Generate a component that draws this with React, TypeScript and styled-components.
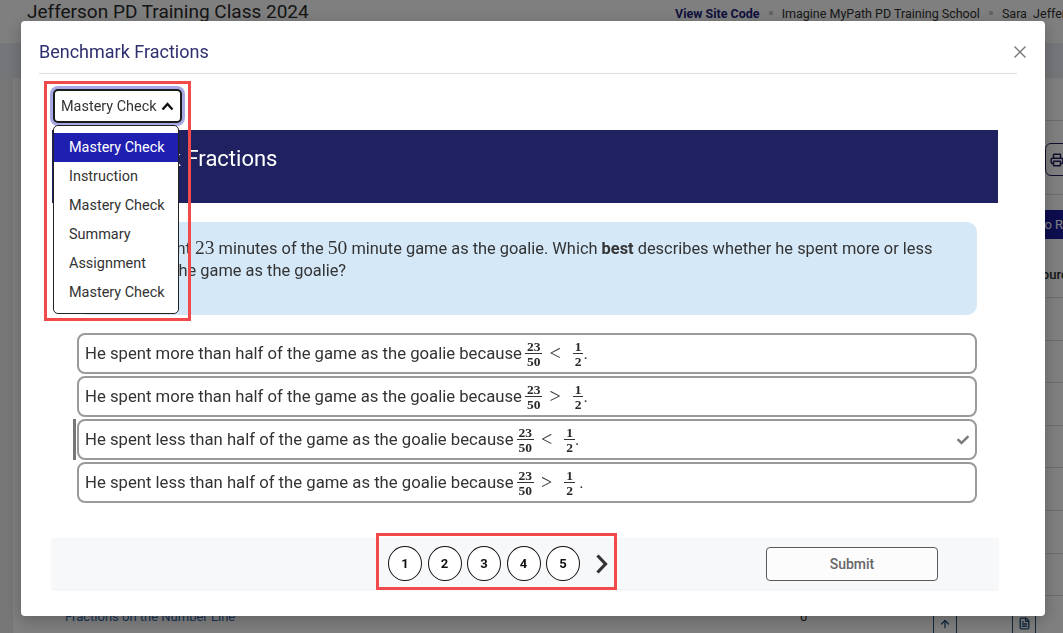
import styled, { createGlobalStyle } from "styled-components";
import { FaCheck } from "react-icons/fa";
import { Printer, ArrowUp, FileText } from "lucide-react";

const GlobalStyle = createGlobalStyle`
  * { box-sizing: border-box; }
  html, body { margin: 0; padding: 0; }
  body {
    font-family: Roboto, "Liberation Sans", Arial, sans-serif;
    background: #ffffff;
    color: #2c2c2c;
    overflow: hidden;
  }
`;

const serif = `"Liberation Serif", "DejaVu Serif", "Times New Roman", serif`;

/* ---------- page behind the dialog ---------- */

const Page = styled.div`
  height: 633px;
  overflow: hidden;
  background: #ffffff;
`;

const TopBar = styled.header`
  display: grid;
  grid-template-columns: 648px auto;
  align-items: start;
  height: 26px;
  padding-left: 27px;
  white-space: nowrap;
  overflow: hidden;
`;

const ClassTitle = styled.h1`
  margin: 1px 0 0;
  font-size: 19px;
  font-weight: 400;
  line-height: 22px;
  color: #2a2a2a;
`;

const TopLinks = styled.nav`
  display: flex;
  align-items: center;
  gap: 9px;
  height: 26px;
  font-size: 12.5px;
  color: #303030;
`;

const SiteCode = styled.a`
  font-weight: 700;
  color: #1c1e78;
  text-decoration: none;
`;

const Bullet = styled.span`
  width: 4px;
  height: 4px;
  border-radius: 1px;
  background: #c8c8c8;
`;

const NavBand = styled.div`
  margin-top: 17px;
  height: 35px;
  background: #eaedf5;
`;

const Workspace = styled.div`
  display: flex;
  height: 555px;
`;

const SideRail = styled.aside`
  flex: 0 0 13px;
  background: #efefef;
`;

const Main = styled.main`
  flex: 1;
  min-width: 0;
  padding-left: 8px;
`;

const Toolbar = styled.div`
  display: flex;
  justify-content: flex-end;
  align-items: flex-start;
  margin-top: 42px;
  height: 75px;
  padding-top: 22px;
  border-top: 1px solid #dadada;
  border-bottom: 1px solid #dadada;
`;

const PrintButton = styled.button`
  display: flex;
  flex-shrink: 0;
  align-items: center;
  gap: 6px;
  width: 70px;
  height: 33px;
  margin-right: -52px;
  padding: 0 4px;
  border: 1.5px solid #1f2160;
  border-radius: 6px;
  background: #ffffff;
  color: #1f2160;
  font-size: 13px;
`;

const ActionRow = styled.div`
  display: flex;
  justify-content: flex-end;
  height: 56px;
  padding-top: 15px;
`;

const ResourceButton = styled.button`
  flex-shrink: 0;
  height: 29px;
  margin-right: -63px;
  padding: 0 10px;
  border: 0;
  border-radius: 3px;
  background: #1a1a9e;
  color: #ffffff;
  font-family: inherit;
  font-size: 13px;
  white-space: nowrap;
`;

const TableRow = styled.div<{ $head?: boolean }>`
  display: grid;
  grid-template-columns: 735px 133px 79px 140px;
  align-items: center;
  height: ${(p) => (p.$head ? "47px" : "42.6px")};
  padding-left: 44px;
  border-bottom: 1px solid #dadada;
  font-size: 13px;
  font-weight: ${(p) => (p.$head ? 500 : 400)};
  white-space: nowrap;
`;

const ColumnTitle = styled.span<{ $indent?: number }>`
  padding-left: ${(p) => p.$indent ?? 0}px;
`;

const LessonLink = styled.a`
  color: #2e62a8;
  text-decoration: none;
`;

const RowIconButton = styled.span`
  display: flex;
  align-items: center;
  justify-content: center;
  width: 24px;
  height: 26px;
  margin-top: 14px;
  border: 1.5px solid #1f4f7a;
  border-radius: 4px;
  color: #1f4f7a;
`;

/* ---------- dialog ---------- */

const Backdrop = styled.div`
  position: fixed;
  inset: 0;
  background: rgba(0, 0, 0, 0.5);
`;

const Dialog = styled.div`
  position: fixed;
  top: 21px;
  left: 21px;
  width: 1024px;
  height: 595px;
  display: flex;
  flex-direction: column;
  background: #ffffff;
  border-radius: 4px;
  box-shadow: 0 4px 16px rgba(0, 0, 0, 0.25);
`;

const DialogHeader = styled.div`
  display: flex;
  align-items: flex-end;
  justify-content: space-between;
  height: 53px;
  margin: 0 28px 0 18px;
  padding-bottom: 10px;
  border-bottom: 1px solid #dedede;
`;

const DialogTitle = styled.h2`
  margin: 0;
  font-size: 18px;
  font-weight: 400;
  line-height: 22px;
  color: #2d2f6e;
`;

const CloseButton = styled.button`
  display: flex;
  width: 14px;
  height: 14px;
  margin: 0 -10px 4px 0;
  padding: 0;
  border: 0;
  background: none;
  color: #7a7a7a;
`;

const DialogBody = styled.div`
  display: flex;
  flex-direction: column;
  padding: 0 47px 0 31px;
`;

const SelectWrap = styled.div`
  position: relative;
  align-self: flex-start;
  margin: 15px 0 0 1px;
  z-index: 2;
`;

const SelectButton = styled.button`
  display: flex;
  align-items: center;
  gap: 4px;
  width: 129px;
  height: 34px;
  padding: 0 6px;
  border: 2px solid #1b1b1b;
  border-radius: 5px;
  background: #ffffff;
  box-shadow: 0 0 0 3px #a7a7e4;
  font-family: inherit;
  font-size: 14.45px;
  color: #333333;
  white-space: nowrap;
`;

const Menu = styled.ul`
  position: absolute;
  top: 36px;
  left: 0;
  width: 126px;
  margin: 0;
  padding: 7px 0 6px;
  list-style: none;
  background: #ffffff;
  border: 1px solid #222222;
  border-radius: 5px;
`;

const MenuItem = styled.li<{ $active?: boolean }>`
  height: 29px;
  padding-left: 15px;
  line-height: 29px;
  font-size: 14.45px;
  white-space: nowrap;
  background: ${(p) => (p.$active ? "#2020b0" : "transparent")};
  color: ${(p) => (p.$active ? "#ffffff" : "#333333")};
`;

const Banner = styled.div`
  height: 73px;
  margin-top: 7px;
  padding: 15px 18px;
  background: #1f2160;
  color: #ffffff;
  font-size: 22px;
  line-height: 28px;
`;

const QuestionCard = styled.div`
  margin: 19px 21px 0 25px;
  padding: 15px 20px 33px 9px;
  border-radius: 10px;
  background: #d5e8f8;
  font-size: 16.4px;
  line-height: 22px;
  color: #333333;
`;

const MathNum = styled.span`
  font-family: ${serif};
  font-size: 19.5px;
`;

const Answers = styled.div`
  display: flex;
  flex-direction: column;
  gap: 2px;
  margin: 18px 21px 0 25px;
`;

const Answer = styled.div<{ $selected?: boolean }>`
  position: relative;
  display: flex;
  align-items: center;
  height: 41px;
  padding: 0 6px 0 6px;
  border: 2px solid #9a9a9a;
  border-radius: 8px;
  font-size: 16.7px;
  color: #333333;
  white-space: pre;

  &::before {
    content: "";
    display: ${(p) => (p.$selected ? "block" : "none")};
    position: absolute;
    left: -6px;
    top: -2px;
    bottom: -2px;
    width: 3px;
    background: #777777;
  }
`;

const Frac = styled.span`
  display: inline-flex;
  flex-direction: column;
  align-items: center;
  margin-left: 3px;
  font-family: ${serif};
  font-size: 13.5px;
  font-weight: 700;
  line-height: 11px;
  color: #2a2a2a;
`;

const FracTop = styled.span`
  padding: 0 2px 1px;
  border-bottom: 1px solid #333333;
`;

const FracBottom = styled.span`
  padding-top: 2px;
`;

const Relation = styled.span`
  margin: 0 9px 0 7px;
  font-family: ${serif};
  font-size: 20px;
`;

const CheckMark = styled.span`
  display: flex;
  margin-left: auto;
  color: #7a7a7a;
`;

const Footer = styled.div`
  display: flex;
  align-items: center;
  justify-content: flex-end;
  gap: 158px;
  height: 51px;
  margin-top: 35px;
  padding-right: 60px;
  background: #f7f8fa;
  box-shadow: 0 1px 2px rgba(0, 0, 0, 0.08);
`;

const Pagination = styled.div`
  display: flex;
  align-items: center;
  gap: 5.5px;
`;

const PageDot = styled.button`
  width: 34px;
  height: 35px;
  padding: 0;
  border: 1px solid #111111;
  border-radius: 50%;
  background: #ffffff;
  font-family: inherit;
  font-size: 13px;
  font-weight: 700;
  color: #111111;
`;

const NextArrow = styled.svg`
  margin-left: 9.5px;
`;

const SubmitButton = styled.button`
  width: 172px;
  height: 34px;
  border: 1px solid #5a5a5a;
  border-radius: 4px;
  background: #fcfcfc;
  font-family: inherit;
  font-size: 14px;
  font-weight: 500;
  color: #666666;
`;

const Callout = styled.div<{ $x: number; $y: number; $w: number; $h: number }>`
  position: fixed;
  left: ${(p) => p.$x}px;
  top: ${(p) => p.$y}px;
  width: ${(p) => p.$w}px;
  height: ${(p) => p.$h}px;
  border: 3px solid #f24a4a;
  pointer-events: none;
`;

const menuItems = ["Mastery Check", "Instruction", "Mastery Check", "Summary", "Assignment", "Mastery Check"];

const answers = [
  { text: "He spent more than half of the game as the goalie because", rel: "<", tail: "." },
  { text: "He spent more than half of the game as the goalie because", rel: ">", tail: "." },
  { text: "He spent less than half of the game as the goalie because", rel: "<", tail: ".", selected: true },
  { text: "He spent less than half of the game as the goalie because", rel: ">", tail: " ." },
];

const lessons = [
  "Comparing Fractions",
  "Equivalent Fractions",
  "Fractions Greater Than One",
  "Unit Fractions",
  "Fractions of a Set",
  "Benchmark Fractions",
  "Mixed Numbers",
  "Fractions on the Number Line",
];

function Fraction({ top, bottom }: { top: string; bottom: string }) {
  return (
    <Frac>
      <FracTop>{top}</FracTop>
      <FracBottom>{bottom}</FracBottom>
    </Frac>
  );
}

export default function App() {
  return (
    <>
      <GlobalStyle />
      <Page>
        <TopBar>
          <ClassTitle>Jefferson PD Training Class 2024</ClassTitle>
          <TopLinks>
            <SiteCode href="#">View Site Code</SiteCode>
            <Bullet />
            <span>Imagine MyPath PD Training School</span>
            <Bullet />
            <span>Sara&nbsp; Jefferson</span>
          </TopLinks>
        </TopBar>
        <NavBand />
        <Workspace>
          <SideRail />
          <Main>
            <Toolbar>
              <PrintButton>
                <Printer size={14} strokeWidth={2.5} />
                Print
              </PrintButton>
            </Toolbar>
            <ActionRow>
              <ResourceButton>Go to Resources</ResourceButton>
            </ActionRow>
            <TableRow $head>
              <ColumnTitle>Lesson</ColumnTitle>
              <ColumnTitle>Score</ColumnTitle>
              <ColumnTitle>Print</ColumnTitle>
              <ColumnTitle $indent={8}>Resources</ColumnTitle>
            </TableRow>
            {lessons.map((name) => (
              <TableRow key={name}>
                <LessonLink href="#">{name}</LessonLink>
                <span>0</span>
                <RowIconButton>
                  <ArrowUp size={12} strokeWidth={2.5} />
                </RowIconButton>
                <RowIconButton>
                  <FileText size={13} strokeWidth={2.5} />
                </RowIconButton>
              </TableRow>
            ))}
          </Main>
        </Workspace>
      </Page>

      <Backdrop />
      <Dialog>
        <DialogHeader>
          <DialogTitle>Benchmark Fractions</DialogTitle>
          <CloseButton aria-label="Close">
            <svg width="14" height="14" viewBox="0 0 14 14">
              <path d="M1.5 1.5 L12.5 12.5 M12.5 1.5 L1.5 12.5" stroke="currentColor" strokeWidth="1.4" />
            </svg>
          </CloseButton>
        </DialogHeader>

        <DialogBody>
          <SelectWrap>
            <SelectButton>
              Mastery Check
              <svg width="13" height="9" viewBox="0 0 13 9">
                <path d="M1.5 7.5 L6.5 2 L11.5 7.5" stroke="#111" strokeWidth="2.4" fill="none" />
              </svg>
            </SelectButton>
            <Menu>
              {menuItems.map((item, i) => (
                <MenuItem key={i} $active={i === 0}>
                  {item}
                </MenuItem>
              ))}
            </Menu>
          </SelectWrap>

          <Banner>Benchmark Fractions</Banner>

          <QuestionCard>
            Dominic spent <MathNum>23</MathNum> minutes of the <MathNum>50</MathNum> minute game as the
            goalie. Which <b>best</b> describes whether he spent more or less than half of the game as the
            goalie?
          </QuestionCard>

          <Answers>
            {answers.map((a, i) => (
              <Answer key={i} $selected={a.selected}>
                {a.text}
                <Fraction top="23" bottom="50" />
                <Relation>{a.rel}</Relation>
                <Fraction top="1" bottom="2" />
                {a.tail}
                {a.selected && (
                  <CheckMark>
                    <FaCheck size={12} />
                  </CheckMark>
                )}
              </Answer>
            ))}
          </Answers>

          <Footer>
            <Pagination>
              {[1, 2, 3, 4, 5].map((n) => (
                <PageDot key={n}>{n}</PageDot>
              ))}
              <NextArrow width="13" height="22" viewBox="0 0 13 22">
                <path d="M2.5 2.5 L10.5 11 L2.5 19.5" stroke="#333" strokeWidth="3.2" fill="none" />
              </NextArrow>
            </Pagination>
            <SubmitButton>Submit</SubmitButton>
          </Footer>
        </DialogBody>
      </Dialog>

      <Callout $x={44} $y={81} $w={147} $h={240} />
      <Callout $x={376} $y={533} $w={241} $h={57} />
    </>
  );
}
